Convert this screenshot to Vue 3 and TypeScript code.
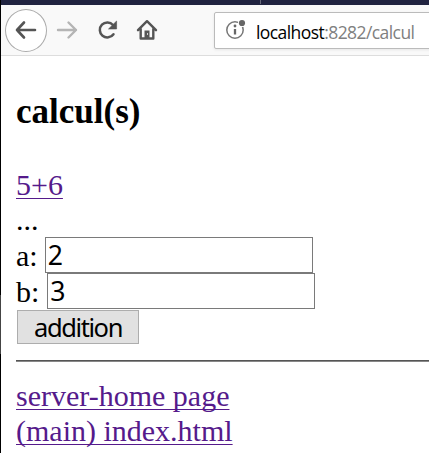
<script setup lang="ts">
import { ref } from 'vue'

const a = ref<string>('2')
const b = ref<string>('3')
</script>

<template>
  <div class="window">
    <div class="tabs"><span class="tab"></span></div>
    <header class="toolbar">
      <button class="nav back" aria-label="Back">
        <svg width="42" height="42" viewBox="0 0 42 42" fill="none" stroke="#555" stroke-width="2.6" stroke-linecap="round" stroke-linejoin="round">
          <path d="M30 21H12M19 13.5L12 21L19 28.5" />
        </svg>
      </button>
      <button class="nav forward" aria-label="Forward">
        <svg width="22" height="20" viewBox="0 0 22 20" fill="none" stroke="#b5b5b5" stroke-width="2.4" stroke-linecap="round" stroke-linejoin="round">
          <path d="M2 10H20M12.5 2.5L20 10L12.5 17.5" />
        </svg>
      </button>
      <button class="nav reload" aria-label="Reload">
        <svg width="22" height="20" viewBox="0 0 22 20">
          <path d="M16.5 14.2A7.5 7.5 0 1 1 16 5" fill="none" stroke="#555" stroke-width="2.5" stroke-linecap="round" />
          <path d="M19.6 1V9H11.5Z" fill="#555" stroke="#555" stroke-width="0.6" stroke-linejoin="round" />
        </svg>
      </button>
      <button class="nav home" aria-label="Home">
        <svg width="22" height="22" viewBox="0 0 22 22" fill="none" stroke="#555" stroke-width="2.4" stroke-linecap="round" stroke-linejoin="round">
          <path d="M2 11.2L11 2.2L20 11.2M4.7 10V19.5H17.3V10" />
          <path d="M8.5 20V11.5H13.5V20Z" fill="#555" stroke="none" />
          <path d="M11.5 14.5V15.5" stroke="#ddd" stroke-width="1" />
        </svg>
      </button>
      <div class="address">
        <svg class="info" width="22" height="22" viewBox="0 0 22 22">
          <circle cx="10" cy="12" r="8.2" fill="none" stroke="#777" stroke-width="1.5" />
          <circle cx="10" cy="8" r="1.4" fill="#666" />
          <path d="M10 11V16.5" stroke="#666" stroke-width="2.3" />
          <circle cx="17" cy="5" r="4" fill="#fff" />
          <circle cx="17" cy="5" r="3.1" fill="#666" />
        </svg>
        <span class="url"><span class="host">localhost</span>:8282/calcul</span>
      </div>
    </header>
    <main class="page">
      <h3>calcul(s)</h3>
      <div class="line"><a href="#">5+6</a></div>
      <div class="line">...</div>
      <form @submit.prevent>
        <label class="field"><span>a:</span><input v-model="a" type="text" /></label>
        <label class="field second"><span>b:</span><input v-model="b" type="text" /></label>
        <button class="submit" type="submit">addition</button>
      </form>
      <hr />
      <div class="line"><a href="#">server-home page</a></div>
      <div class="line"><a href="#">(main) index.html</a></div>
    </main>
  </div>
</template>

<style>
body {
  background: #fff;
  overflow: hidden;
}
</style>

<style scoped>
.window {
  box-sizing: border-box;
  height: 453px;
  overflow: hidden;
  border-left: 1px solid;
  border-image: linear-gradient(#000 295px, #444 295px, #444 353px, #000 353px) 1;
}
.tabs {
  height: 5px;
  background: #202340;
}
.tab {
  display: block;
  width: 259px;
  height: 4px;
  border-right: 1px solid #666879;
}
.toolbar {
  box-sizing: border-box;
  display: flex;
  align-items: center;
  height: 51px;
  padding-left: 4px;
  background: #f9f9f9;
  border-bottom: 1px solid #ddd;
}
.nav {
  display: flex;
  flex: none;
  margin: 0;
  padding: 0;
  border: 0;
  background: none;
}
.back {
  box-sizing: border-box;
  width: 42px;
  height: 43px;
  align-items: center;
  justify-content: center;
  border: 1px solid #aaa;
  border-radius: 50%;
  background: #fff;
}
.back svg {
  flex: none;
}
.forward {
  margin-left: 9px;
}
.reload {
  margin-left: 19px;
}
.home {
  margin-left: 17px;
}
.address {
  box-sizing: border-box;
  display: flex;
  flex: none;
  align-items: center;
  width: 230px;
  height: 37px;
  margin-left: 56px;
  padding-left: 10px;
  border: 1px solid #bbb;
  border-radius: 2px;
  background: #fff;
  box-shadow: 0 1px 3px rgba(0, 0, 0, 0.08);
}
.info {
  flex: none;
  margin-top: -3px;
}
.url {
  margin-left: 9px;
  padding-top: 3px;
  font: 17.5px/24px "Open Sans", "Noto Sans", sans-serif;
  letter-spacing: -0.57px;
  color: #808080;
  white-space: nowrap;
}
.host {
  color: #000;
}
.page {
  padding: 35px 0 0 15px;
  font-family: "Liberation Serif", serif;
  font-size: 30px;
  line-height: 35px;
  color: #000;
}
h3 {
  margin: 0 0 35px;
  font-size: 35px;
  line-height: 41px;
}
.line {
  height: 35px;
}
a {
  color: #551a8b;
  text-decoration: underline;
  text-decoration-thickness: 1px;
  text-underline-offset: 3px;
  text-decoration-skip-ink: none;
}
.field {
  display: flex;
  align-items: center;
  gap: 7px;
  height: 36px;
}
.second {
  gap: 8px;
}
.field input {
  box-sizing: border-box;
  width: 268px;
  height: 36px;
  margin: 0;
  padding: 0 2px 1px;
  border: 1px solid #7a7a7a;
  border-radius: 0;
  background: #fff;
  color: #000;
  font: 26.6px/33px "Noto Sans", sans-serif;
  outline: none;
}
.submit {
  box-sizing: border-box;
  display: block;
  width: 122px;
  height: 34px;
  margin: 1px 0 0 1px;
  padding: 0;
  border: 1px solid #adadad;
  background: #e1e1e1;
  color: #000;
  font: 25.5px/32px "Noto Sans", sans-serif;
  letter-spacing: -1.4px;
}
hr {
  height: 0;
  margin: 16px 0;
  border: 0;
  border-top: 1px solid #555;
  border-bottom: 1px solid #888;
}
</style>
